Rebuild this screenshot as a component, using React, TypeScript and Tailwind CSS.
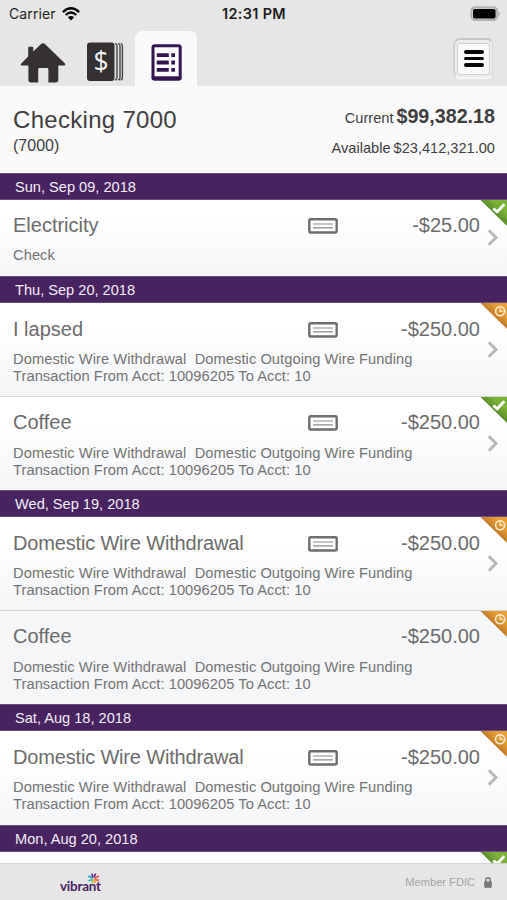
import React from "react";

type Status = "cleared" | "pending";

interface Transaction {
  title: string;
  lines: string[];
  amount: string;
  status: Status;
  check: boolean;
  arrow: boolean;
}

interface Day {
  date: string;
  items: Transaction[];
}

const WIRE = [
  "Domestic Wire Withdrawal\u00a0 Domestic Outgoing Wire Funding",
  "Transaction From Acct: 10096205 To Acct: 10",
];

const wire = (title: string, status: Status, detail = true): Transaction => ({
  title,
  lines: WIRE,
  amount: "-$250.00",
  status,
  check: detail,
  arrow: detail,
});

const DAYS: Day[] = [
  {
    date: "Sun, Sep 09, 2018",
    items: [
      { title: "Electricity", lines: ["Check"], amount: "-$25.00", status: "cleared", check: true, arrow: true },
    ],
  },
  { date: "Thu, Sep 20, 2018", items: [wire("I lapsed", "pending"), wire("Coffee", "cleared")] },
  {
    date: "Wed, Sep 19, 2018",
    items: [wire("Domestic Wire Withdrawal", "pending"), wire("Coffee", "pending", false)],
  },
  { date: "Sat, Aug 18, 2018", items: [wire("Domestic Wire Withdrawal", "pending")] },
];

function WifiIcon() {
  return (
    <svg width="18" height="14" viewBox="0 0 18 14" fill="none" stroke="#050505" strokeWidth="2.3">
      <path d="M0.9 5.1 Q9 -2.5 17.1 5.1" />
      <path d="M3.7 8 Q9 3.1 14.3 8" />
      <path d="M9 13.4 L5.9 10.2 Q9 7.6 12.1 10.2 Z" fill="#050505" stroke="none" />
    </svg>
  );
}

function BatteryIcon() {
  return (
    <svg width="32" height="16" viewBox="0 0 32 16">
      <rect x="1.2" y="1.2" width="26" height="13" rx="3.6" fill="#c9c9c9" stroke="#a4a4a4" strokeWidth="1.2" />
      <rect x="3" y="3" width="22.5" height="9.4" rx="1.6" fill="#000" />
      <path d="M28.6 5.2 Q31 7.7 28.6 10.2Z" fill="#9c9c9c" />
    </svg>
  );
}

function HomeIcon() {
  return (
    <svg width="46" height="40" viewBox="0 0 46 40" fill="#353132">
      <path d="M8.2 4.8 Q8.2 3.7 9.3 3.7 H12.2 Q13.3 3.7 13.3 4.8 V8.4 L20.8 1.3 Q23 -0.6 25.2 1.3 L45 20.6 Q46 22.4 44 22.5 H38.3 V36.8 Q38.3 39.4 35.7 39.4 H28.4 V26.4 Q28.4 25 27 25 H19.6 Q18.2 25 18.2 26.4 V39.4 H11 Q8.4 39.4 8.4 36.8 V22.5 H2 Q0 22.3 1 20.8 L8.2 13.6Z" />
    </svg>
  );
}

function MoneyIcon() {
  return (
    <div className="relative h-[40px] w-[37px]">
      <svg width="37" height="40" viewBox="0 0 37 40">
        <rect x="0" y="0.6" width="27.5" height="38.4" rx="3" fill="#353132" />
        <path
          d="M28 1.4 Q30 2 30 4 V35.6 Q30 37.6 28 38.2 M31.2 1.4 Q33 2 33 4 V35.6 Q33 37.6 31.2 38.2 M33.8 1.4 Q35.4 2 35.4 4 V35.6 Q35.4 37.6 33.8 38.2"
          fill="none"
          stroke="#454142"
          strokeWidth="1.4"
        />
      </svg>
      <span className="absolute left-0 top-0 w-[28px] text-center font-['Open_Sans',sans-serif] text-[26.5px] leading-[38px] text-[#f5f5f5]">
        $
      </span>
    </div>
  );
}

function ListIcon() {
  return (
    <svg width="31" height="37" viewBox="0 0 31 37">
      <rect x="2" y="1.8" width="27.2" height="33.4" rx="1.8" fill="#fafafa" stroke="#331650" strokeWidth="3" />
      <path d="M0.8 33.8H30.2" stroke="#331650" strokeWidth="3" />
      <path
        d="M5.8 11.1H17.8 M5.8 18.5H17.8 M5.8 25.9H17.8 M20.3 11.1H24 M20.3 18.5H24 M20.3 25.9H24"
        stroke="#331650"
        strokeWidth="3.8"
      />
    </svg>
  );
}

function CheckSlip() {
  return (
    <svg width="30" height="16" viewBox="0 0 30 16" fill="none">
      <rect x="1.3" y="1.3" width="27.4" height="13.2" rx="1.2" stroke="#6e6e6e" strokeWidth="2.4" />
      <path d="M5 6H25 M5 9.8H25" stroke="#8a8a8a" strokeWidth="1.2" />
    </svg>
  );
}

function Corner({ status }: { status: Status }) {
  const cleared = status === "cleared";
  return (
    <svg className="absolute right-0 top-0" width="27" height="27" viewBox="0 0 27 27" fill="none">
      <defs>
        <linearGradient id={`corner-${status}`} x1="0.45" y1="0.55" x2="0.75" y2="0.25">
          <stop offset="0" stopColor={cleared ? "#55852a" : "#b87425"} />
          <stop offset="1" stopColor={cleared ? "#7bb437" : "#e9a037"} />
        </linearGradient>
      </defs>
      <path d="M0.5 0H27V26Z" fill={`url(#corner-${status})`} />
      {cleared ? (
        <path d="M13.3 8.5L17.2 11.7L24.3 4.3" stroke="#fff" strokeWidth="2.9" />
      ) : (
        <g stroke="#fff1dc" strokeWidth="1.5">
          <circle cx="20.1" cy="8.2" r="4.5" />
          <path d="M20.1 5.6V8.4H22.6" strokeWidth="1.2" />
        </g>
      )}
    </svg>
  );
}

function Chevron({ short }: { short: boolean }) {
  return (
    <svg
      className={short ? "absolute right-[8px] top-[29px]" : "absolute right-[8px] top-[38px]"}
      width="12"
      height="17"
      viewBox="0 0 12 17"
      fill="none"
    >
      <path d="M1.8 1.2L9 8.5L1.8 15.8" stroke="#b9b9b9" strokeWidth="3" />
    </svg>
  );
}

function Row({ t, first, only }: { t: Transaction; first: boolean; only: boolean }) {
  const short = t.lines.length === 1;
  const size = short
    ? "h-[76px] pt-[13px]"
    : only
      ? "h-[94px] pt-[14px]"
      : first
        ? "h-[93px] pt-[14px]"
        : "h-[94px] border-t border-[#d2d4d5] pt-[13px]";
  const fill = t.arrow ? "bg-gradient-to-b from-white from-25% to-[#f3f5f7]" : "bg-[#f4f6f8]";
  const tracking = t.title.length > 12 ? "tracking-[-0.17px]" : "";
  return (
    <div className={`relative shrink-0 px-[13px] ${size} ${fill}`}>
      <div className="flex h-[25px] items-center text-[20px] leading-[25px] text-[#6c6c6c]">
        <span className={`w-[295px] whitespace-nowrap ${tracking}`}>{t.title}</span>
        {t.check && <CheckSlip />}
        <span className="ml-auto mr-[14px]">{t.amount}</span>
      </div>
      <div
        className={`whitespace-pre text-[14.7px] tracking-[0.05px] text-[#747474] ${
          short ? "mt-[9px] leading-[17px]" : first ? "mt-[9px] leading-[17px]" : "mt-[10px] leading-[16.5px]"
        }`}
      >
        {t.lines.map((line) => (
          <div key={line}>{line}</div>
        ))}
      </div>
      <Corner status={t.status} />
      {t.arrow && <Chevron short={short} />}
    </div>
  );
}

function DayHeader({ date, top }: { date: string; top: boolean }) {
  return (
    <h2
      className={`h-[27px] shrink-0 border-y border-[#6b4e80] bg-[#47235f] pl-[15px] text-[14.6px] text-[#f4eef7] ${
        top ? "leading-[26px]" : "leading-[27px]"
      }`}
    >
      {date}
    </h2>
  );
}

function Pinwheel() {
  return (
    <svg className="block" width="13" height="11" viewBox="0 0 13 11" fill="none" strokeWidth="1.8">
      <path d="M6 4.8L4.8 0.8" stroke="#5d2d86" />
      <path d="M7.2 4.6L8.5 0.5" stroke="#6a3a91" />
      <path d="M5.5 5.2L1.2 3" stroke="#23a5c9" />
      <path d="M5.5 6.2L1.5 8" stroke="#39b7bd" />
      <path d="M7.5 5.2L12 3" stroke="#e94b59" />
      <path d="M7.5 6.1L12 7.7" stroke="#ed7034" />
      <path d="M6 6.4L5 10.3" stroke="#9dc644" />
      <path d="M7.1 6.4L8.4 10" stroke="#f49b36" />
    </svg>
  );
}

export default function App() {
  return (
    <div className="flex h-[900px] w-[507px] flex-col overflow-hidden bg-white font-['Liberation_Sans',Arial,sans-serif]">
      <header className="h-[86px] shrink-0 bg-[#e6e6e6]">
        <div className="grid h-[27px] grid-cols-3 items-center pl-[9px] pr-[5px] font-[Inter,sans-serif]">
          <div className="flex items-center gap-[6px] text-[14px] leading-[26px] tracking-[0.1px] text-[#222]">
            <span>Carrier</span>
            <WifiIcon />
          </div>
          <span className="whitespace-nowrap pr-[3px] text-center text-[14.4px] font-semibold leading-[26px] tracking-[0.35px] text-[#1b1b1b]">
            12:31 PM
          </span>
          <div className="flex justify-end">
            <BatteryIcon />
          </div>
        </div>
        <div className="flex h-[59px] items-start pt-[4px]">
          <div className="ml-[20px] mt-[12px]">
            <HomeIcon />
          </div>
          <div className="ml-[21px] mt-[11px]">
            <MoneyIcon />
          </div>
          <div className="ml-[11px] flex h-[55px] w-[62px] justify-center rounded-t-[7px] bg-[#fafafa] pt-[12.5px]">
            <ListIcon />
          </div>
          <div className="ml-auto mr-[13px] mt-[7px] flex h-[41px] w-[41px] items-center justify-center rounded-[7px] border-2 border-b-[#f5f5f5] border-l-[#d2d2d2] border-r-[#dedede] border-t-[#c5c5c5] bg-[#ececec]">
            <div className="flex h-[32px] w-[33px] flex-col items-center justify-center gap-[3px] rounded-[3px] border border-[#cfcfcf] bg-[#fafafa]">
              <div className="h-[3.4px] w-[20px] rounded-full bg-[#080808]" />
              <div className="h-[3.4px] w-[20px] rounded-full bg-[#080808]" />
              <div className="h-[3.4px] w-[20px] rounded-full bg-[#080808]" />
            </div>
          </div>
        </div>
      </header>

      <section className="flex h-[87px] shrink-0 justify-between bg-[#fafafa] pl-[13px] pr-[12px] text-[#404040]">
        <div className="pt-[19px]">
          <h1 className="text-[24px] leading-[30px] tracking-[0.3px]">Checking 7000</h1>
          <p className="text-[16px] leading-[22px]">(7000)</p>
        </div>
        <div className="flex flex-col items-end pt-[16px] text-[14.6px]">
          <div className="flex items-baseline gap-[3px] leading-[28px]">
            <span>Current</span>
            <span className="text-[19.7px] font-bold">$99,382.18</span>
          </div>
          <div className="mt-[2px] flex items-baseline gap-[3px] leading-[28px]">
            <span>Available</span>
            <span>$23,412,321.00</span>
          </div>
        </div>
      </section>

      <main className="flex min-h-0 flex-1 flex-col overflow-hidden">
        {DAYS.map((day, d) => (
          <section key={day.date} className="shrink-0">
            <DayHeader date={day.date} top={d === 0} />
            {day.items.map((t, i) => (
              <Row key={i} t={t} first={i === 0} only={day.items.length === 1} />
            ))}
          </section>
        ))}
        <DayHeader date="Mon, Aug 20, 2018" top={false} />
        <div className="relative flex-1 overflow-hidden bg-white">
          <Corner status="cleared" />
        </div>
      </main>

      <footer className="flex h-[37px] shrink-0 justify-between border-t border-[#d3d3d3] bg-[#e6e6e6] pl-[60px] pr-[15px]">
        <div className="flex flex-col pt-[9px]">
          <div className="ml-[27px]">
            <Pinwheel />
          </div>
          <span className="mt-[-7px] font-[Lato,sans-serif] text-[13.4px] font-bold leading-[18px] tracking-[-0.2px] text-[#47235f]">
            vibrant
          </span>
        </div>
        <div className="flex items-center gap-[9px] text-[11.1px] text-[#a5a5a5]">
          <span>Member FDIC</span>
          <svg width="8" height="11" viewBox="0 0 8 11">
            <path d="M1.7 5V3.2Q1.7 0.8 4 0.8T6.3 3.2V5" fill="none" stroke="#777" strokeWidth="1.4" />
            <rect x="0.2" y="4.5" width="7.6" height="6.3" rx="0.7" fill="#777" />
          </svg>
        </div>
      </footer>
    </div>
  );
}
